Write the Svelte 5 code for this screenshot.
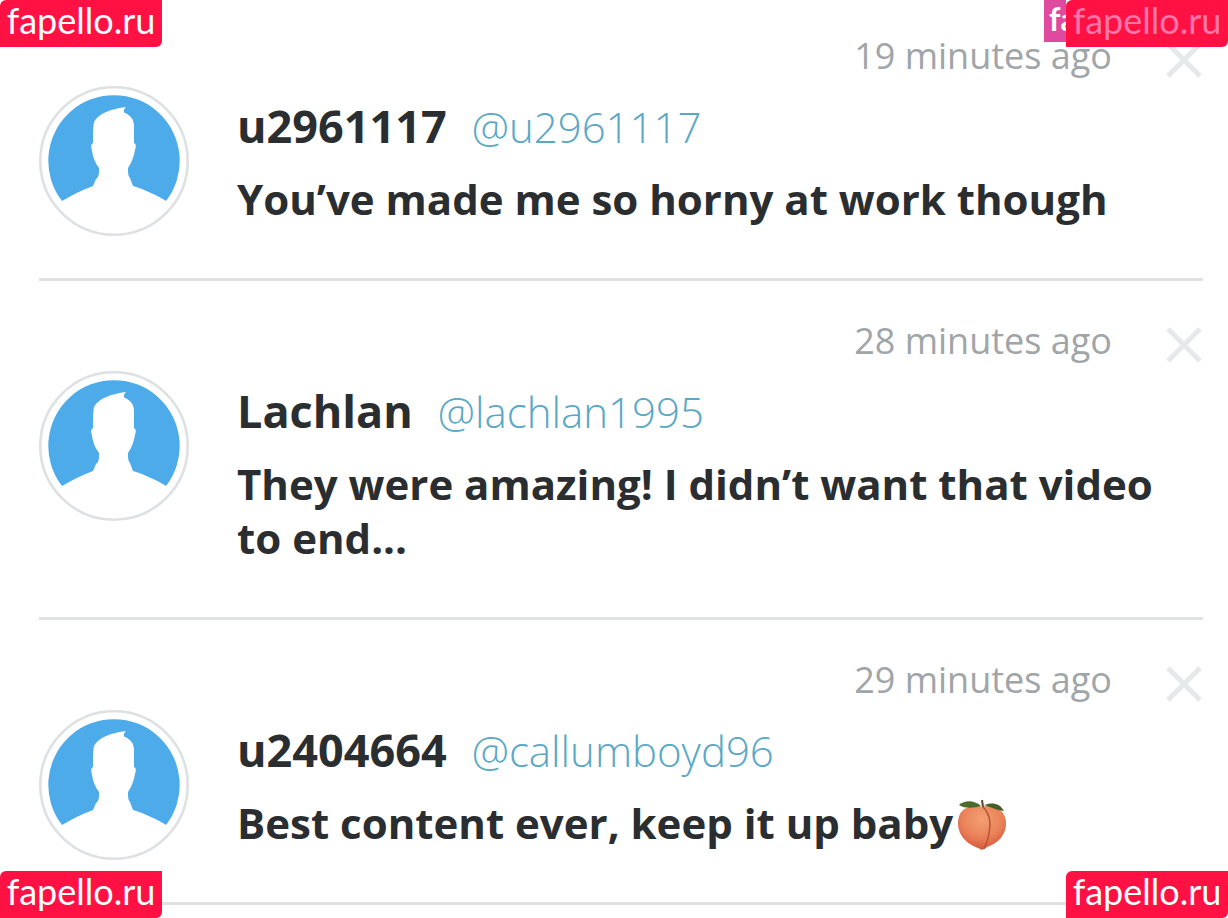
<script lang="ts">
  type Comment = {
    id: number;
    name: string;
    handle: string;
    time: string;
    text: string;
    peach?: boolean;
  };

  let comments = $state<Comment[]>([
    { id: 1, name: 'u2961117', handle: 'u2961117', time: '19 minutes ago', text: 'You’ve made me so horny at work though' },
    { id: 2, name: 'Lachlan', handle: 'lachlan1995', time: '28 minutes ago', text: 'They were amazing! I didn’t want that video to end...' },
    { id: 3, name: 'u2404664', handle: 'callumboyd96', time: '29 minutes ago', text: 'Best content ever, keep it up baby', peach: true },
  ]);

  const corners = ['top-left', 'top-right', 'bottom-left', 'bottom-right'];

  function dismiss(id: number) {
    comments = comments.filter((c) => c.id !== id);
  }
</script>

<main>
  <ul class="comments">
    {#each comments as comment (comment.id)}
      <li class="comment">
        <svg class="avatar" viewBox="0 0 150 150" aria-hidden="true">
          <circle cx="75" cy="75" r="73.7" fill="#fff" stroke="#dde1e3" stroke-width="2.6" />
          <path
            fill="#4eabea"
            d="M23 115A65.7 65.7 0 1 1 127 115C119 110 107 104 94 100L91 92C89 90 89 87 89 82C93 76 95 70 96 64Q98 58 95 57V40C95 33 91 29 86 27Q83 25 87 21C72 23 60 27 55 36Q54 39 54 57Q51 58 53 65C54 71 56 77 60 82C60 88 60 91 57 93L54 100C43 104 33 109 23 115Z"
          />
        </svg>

        <div class="body">
          <div class="meta">
            <time>{comment.time}</time>
            <button class="close" aria-label="Dismiss" onclick={() => dismiss(comment.id)}>
              <svg viewBox="0 0 36 36" aria-hidden="true">
                <path d="M2 2L34 34M34 2L2 34" stroke="#e6e8ea" stroke-width="5" />
              </svg>
            </button>
          </div>
          <div class="author">
            <strong>{comment.name}</strong>
            <a href="#{comment.handle}">@{comment.handle}</a>
          </div>
          <p>
            {comment.text}{#if comment.peach}<svg class="peach" viewBox="0 0 50 52" role="img" aria-label="peach">
                <defs>
                  <radialGradient id="skin" cx="0.5" cy="0.3" r="0.75">
                    <stop offset="0" stop-color="#f3a172" />
                    <stop offset="0.55" stop-color="#ea8259" />
                    <stop offset="1" stop-color="#cf5038" />
                  </radialGradient>
                </defs>
                <path fill="url(#skin)" d="M25 8C17 5 7 8 3 15C-1 24 1 34 9 42C14 47 20 48 25 51C29 48 37 46 42 41C49 34 51 24 47 16C43 8 33 5 25 8Z" />
                <path fill="none" stroke="#b5502f" stroke-width="1.4" d="M26 8C33 15 34 25 32 34C31 41 29 46 27 50" />
                <path fill="#4a6b2c" d="M24 7C17 1 8 1 2 6C8 10 17 9 24 7Z" />
                <path fill="#425f28" d="M27 6C35 3 43 4 47 12C39 11 34 8 27 6Z" />
                <path fill="none" stroke="#5c4a32" stroke-width="2" d="M25 1L26 8" />
              </svg>{/if}
          </p>
        </div>
      </li>
    {/each}
  </ul>

  <span class="tag">fa</span>
  {#each corners as corner}
    <span class="badge {corner}">fapello.ru</span>
  {/each}
</main>

<style>
  :global(body) {
    margin: 0;
    background: #fff;
  }

  main {
    position: relative;
    height: 100vh;
    overflow: hidden;
    font-family: 'Open Sans', 'Noto Sans', sans-serif;
    color: #2b2e30;
  }

  .comments {
    list-style: none;
    margin: -4px 0 0;
    padding: 0 25px 0 39px;
  }

  .comment {
    display: flex;
    gap: 48px;
    padding: 32px 0 42px;
    border-bottom: 3px solid #dfe1e2;
  }

  .avatar {
    flex: none;
    width: 150px;
    height: 150px;
    margin-top: 58px;
  }

  .body {
    flex: 1;
    min-width: 0;
  }

  .meta {
    display: flex;
    align-items: center;
    justify-content: flex-end;
    gap: 54px;
    height: 54px;
    font-size: 36px;
    color: #a0a5a8;
  }

  .close {
    width: 36px;
    height: 36px;
    margin: 10px 1px 0 0;
    padding: 0;
    border: 0;
    background: none;
    cursor: pointer;
  }

  .close svg {
    display: block;
  }

  .author {
    display: flex;
    align-items: baseline;
    gap: 25px;
    margin: 16px 0;
    font-size: 45px;
    line-height: 56px;
  }

  .author strong {
    font-weight: 700;
  }

  .author a {
    font-size: 42px;
    font-weight: 300;
    color: #5aa8c6;
    text-decoration: none;
  }

  p {
    margin: 17px 0 10px;
    font-size: 42px;
    font-weight: 700;
    line-height: 54px;
  }

  .peach {
    width: 50px;
    height: 52px;
    margin: -8px 0 -2px 4px;
    vertical-align: -10px;
  }

  .badge,
  .tag {
    position: absolute;
    box-sizing: border-box;
    font-family: Lato, 'Open Sans', sans-serif;
    color: #fff;
    white-space: nowrap;
  }

  .badge {
    width: 162px;
    height: 47px;
    border-radius: 6px 0 6px 0;
    background: #ff1144;
    font-size: 36px;
    line-height: 40px;
    text-align: center;
  }

  .tag {
    top: 0;
    right: 162px;
    width: 22px;
    height: 42px;
    padding-left: 5px;
    background: #df4a9f;
    font-size: 32px;
    font-weight: 700;
    line-height: 38px;
  }

  .top-left {
    top: 0;
    left: 0;
  }

  .top-right {
    top: 0;
    right: 0;
    color: #ff77a8;
  }

  .bottom-left {
    bottom: 0;
    left: 0;
  }

  .bottom-right {
    right: 0;
    bottom: 0;
  }
</style>
